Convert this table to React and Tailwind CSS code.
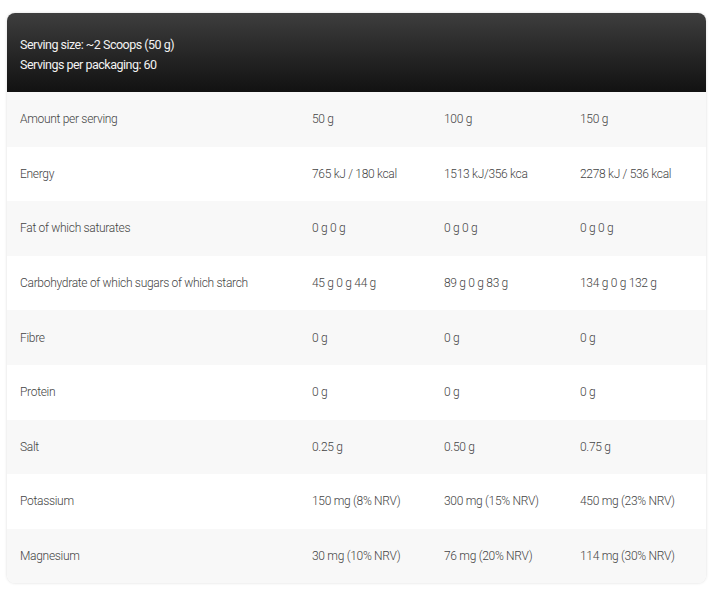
const ROWS = [
  ["Amount per serving", "50 g", "100 g", "150 g"],
  ["Energy", "765 kJ / 180 kcal", "1513 kJ/356 kca", "2278 kJ / 536 kcal"],
  ["Fat of which saturates", "0 g 0 g", "0 g 0 g", "0 g 0 g"],
  ["Carbohydrate of which sugars of which starch", "45 g 0 g 44 g", "89 g 0 g 83 g", "134 g 0 g 132 g"],
  ["Fibre", "0 g", "0 g", "0 g"],
  ["Protein", "0 g", "0 g", "0 g"],
  ["Salt", "0.25 g", "0.50 g", "0.75 g"],
  ["Potassium", "150 mg (8% NRV)", "300 mg (15% NRV)", "450 mg (23% NRV)"],
  ["Magnesium", "30 mg (10% NRV)", "76 mg (20% NRV)", "114 mg (30% NRV)"],
];

export default function App() {
  return (
    <div className="w-[709px] h-[591px] bg-white pt-[13px] px-[7px] font-['Roboto',sans-serif]">
      <div className="w-[699px] rounded-lg overflow-hidden shadow-[0_0_3px_rgba(0,0,0,0.15)] bg-white">
        <header className="h-[79px] bg-gradient-to-b from-[#3e3e3e] to-[#121212] px-[13px] pt-[5px] flex flex-col justify-center gap-[4px] text-[12.5px] text-[#f2f2f2] tracking-[-0.5px] leading-4">
          <p>Serving size: ~2 Scoops (50 g)</p>
          <p>Servings per packaging: 60</p>
        </header>
        {ROWS.map((row, i) => (
          <div
            key={row[0]}
            className={`grid grid-cols-[292px_132px_136px_1fr] h-[54.6px] items-center text-[12px] font-light text-[#444] tracking-[-0.3px] ${
              i % 2 === 0 ? "bg-[#f8f8f8]" : "bg-white"
            }`}
          >
            {row.map((cell, j) => (
              <span key={j} className="px-[13px]">
                {cell}
              </span>
            ))}
          </div>
        ))}
      </div>
    </div>
  );
}
